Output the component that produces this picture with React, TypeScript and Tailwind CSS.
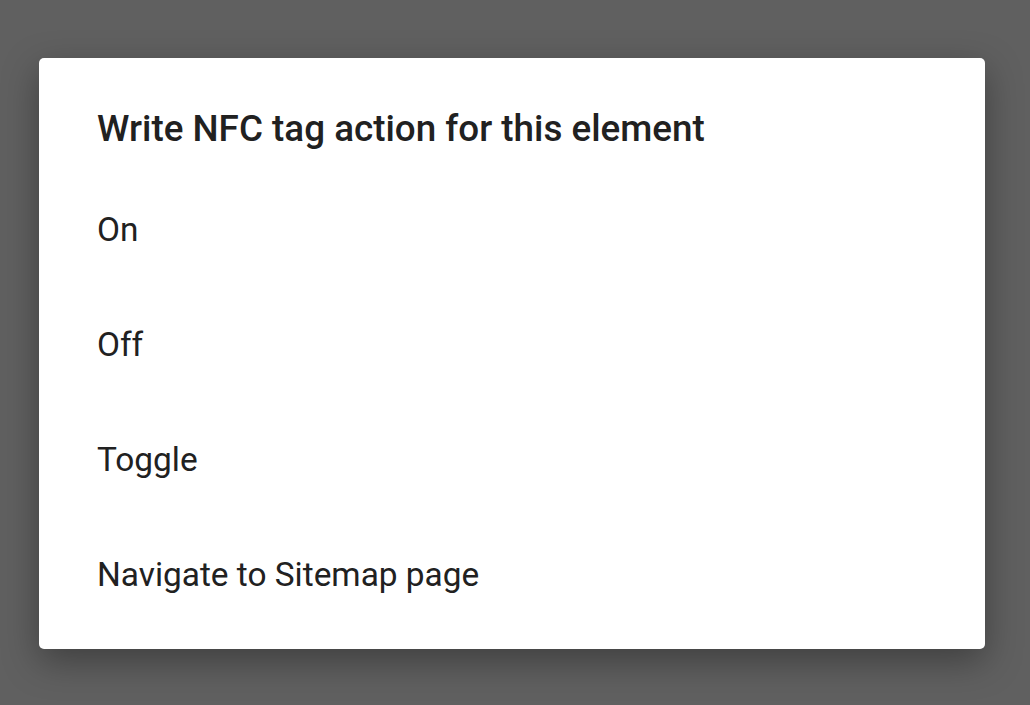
export default function App() {
  const items = ["On", "Off", "Toggle", "Navigate to Sitemap page"];
  return (
    <div
      className="w-[1030px] h-[705px] bg-[#606060] overflow-hidden pt-[58px] pl-[39px]"
      style={{ fontFamily: "Roboto, 'Noto Sans', sans-serif" }}
    >
      <div className="w-[946px] h-[591px] bg-white rounded-[5px] shadow-[0_12px_36px_rgba(0,0,0,0.35)] flex flex-col">
        <div className="h-[115px] pl-[58px] pt-[49px] text-[36.8px] leading-[44px] font-medium text-[#212121]">
          Write NFC tag action for this element
        </div>
        <div className="flex flex-col">
          {items.map((t) => (
            <div
              key={t}
              className="h-[115px] pl-[58px] flex items-center text-[33.4px] text-[#212121]"
            >
              {t}
            </div>
          ))}
        </div>
      </div>
    </div>
  );
}
